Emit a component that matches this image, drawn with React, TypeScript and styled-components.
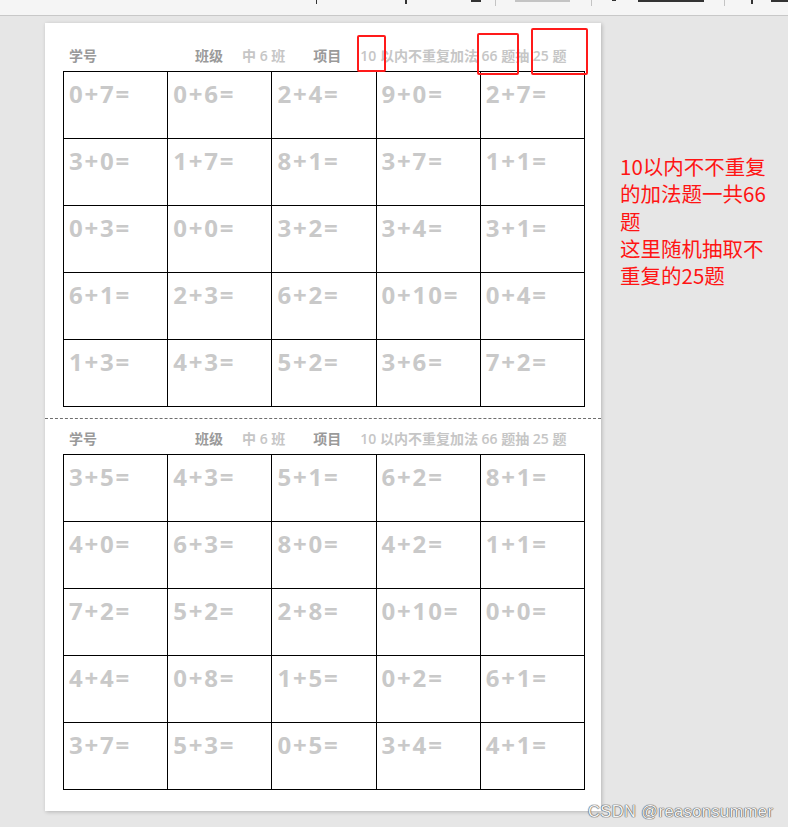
import React from "react";
import styled, { createGlobalStyle } from "styled-components";

const Global = createGlobalStyle`
  html, body { margin: 0; padding: 0; }
  body {
    background: #e6e6e6;
    font-family: "Open Sans", "Noto Sans CJK SC", sans-serif;
    width: 788px;
    height: 827px;
    overflow: hidden;
  }
`;

const Screen = styled.div`
  position: relative;
  width: 788px;
  height: 827px;
  display: flex;
  flex-direction: column;
`;

const Toolbar = styled.div`
  height: 15px;
  background: #f5f5f5;
  border-bottom: 1px solid #c8c8c8;
  display: flex;
  align-items: flex-start;
  padding-left: 316px;
  overflow: hidden;
`;

const ToolMark = styled.span<{ $w: number; $h: number; $ml: number; $dark?: boolean }>`
  display: block;
  width: ${(p) => p.$w}px;
  height: ${(p) => p.$h}px;
  margin-left: ${(p) => p.$ml}px;
  background: ${(p) => (p.$dark ? "#333" : "#c4c4c4")};
`;

const ToolSep = styled.span<{ $ml: number }>`
  display: block;
  width: 1px;
  height: 6px;
  margin-left: ${(p) => p.$ml}px;
  background: #c4c4c4;
`;

const Workspace = styled.div`
  flex: 1;
  display: flex;
  align-items: flex-start;
`;

const Page = styled.div`
  position: relative;
  margin: 7px 0 0 45px;
  width: 556px;
  height: 788px;
  background: #fff;
  box-shadow: 1px 1px 4px rgba(0, 0, 0, 0.22);
  box-sizing: border-box;
  padding-top: 22px;
  display: flex;
  flex-direction: column;
`;

const Sheet = styled.div`
  padding: 0 16px 0 18px;
`;

const Header = styled.div`
  display: flex;
  align-items: center;
  height: 20px;
  margin-bottom: 6px;
  padding-left: 6px;
  font-size: 14px;
  font-weight: 700;
  white-space: nowrap;
`;

const Label = styled.span<{ $w?: number }>`
  color: #9a9a9a;
  font-family: "Noto Sans CJK SC", sans-serif;
  font-weight: 700;
  ${(p) => (p.$w ? `width: ${p.$w}px;` : "")}
  margin-right: 19px;
`;

const Value = styled.span<{ $mr?: number }>`
  color: #c6c6c6;
  font-family: "Open Sans", "Noto Sans CJK SC", sans-serif;
  font-weight: 600;
  margin-right: ${(p) => p.$mr ?? 0}px;
`;

const Grid = styled.table`
  border-collapse: collapse;
  width: 522px;
  table-layout: fixed;
`;

const Cell = styled.td`
  border: 1px solid #000;
  height: 67px;
  box-sizing: border-box;
  vertical-align: top;
  padding: 7px 0 0 5px;
  font-family: "Open Sans", sans-serif;
  font-weight: 700;
  font-size: 24px;
  line-height: 30px;
  letter-spacing: 1.8px;
  color: #c9c9c9;
`;

const Cut = styled.div`
  border-top: 1px dashed #6e6e6e;
  margin: 11px 0 9px;
`;

const Mark = styled.div`
  position: absolute;
  border: 2px solid #ff1a1a;
  border-radius: 2px;
  box-sizing: border-box;
`;

const Note = styled.div`
  margin: 137px 0 0 19px;
  width: 154px;
  color: #ff1414;
  font-family: "Noto Sans CJK SC", sans-serif;
  font-size: 20.5px;
  line-height: 27.3px;
  letter-spacing: 0;
  word-break: break-all;
`;

const Watermark = styled.div`
  position: absolute;
  left: 588px;
  bottom: 6px;
  font-family: "Liberation Sans", Arial, sans-serif;
  font-size: 16.5px;
  color: #f2f2f2;
  text-shadow: 0 0 1px #555, 0 0 1px #555, 0 0 1px #555;
  letter-spacing: 0.4px;
  white-space: nowrap;
`;

const table1 = [
  ["0+7=", "0+6=", "2+4=", "9+0=", "2+7="],
  ["3+0=", "1+7=", "8+1=", "3+7=", "1+1="],
  ["0+3=", "0+0=", "3+2=", "3+4=", "3+1="],
  ["6+1=", "2+3=", "6+2=", "0+10=", "0+4="],
  ["1+3=", "4+3=", "5+2=", "3+6=", "7+2="],
];

const table2 = [
  ["3+5=", "4+3=", "5+1=", "6+2=", "8+1="],
  ["4+0=", "6+3=", "8+0=", "4+2=", "1+1="],
  ["7+2=", "5+2=", "2+8=", "0+10=", "0+0="],
  ["4+4=", "0+8=", "1+5=", "0+2=", "6+1="],
  ["3+7=", "5+3=", "0+5=", "3+4=", "4+1="],
];

const Worksheet: React.FC<{ rows: string[][] }> = ({ rows }) => (
  <Sheet>
    <Header>
      <Label $w={107}>学号</Label>
      <Label>班级</Label>
      <Value $mr={28}>中 6 班</Value>
      <Label>项目</Label>
      <Value>10 以内不重复加法 66 题抽 25 题</Value>
    </Header>
    <Grid>
      <tbody>
        {rows.map((r, i) => (
          <tr key={i}>
            {r.map((c, j) => (
              <Cell key={j}>{c}</Cell>
            ))}
          </tr>
        ))}
      </tbody>
    </Grid>
  </Sheet>
);

export default function App() {
  return (
    <>
      <Global />
      <Screen>
        <Toolbar>
          <ToolMark $w={1} $h={4} $ml={0} $dark />
          <ToolMark $w={3} $h={4} $ml={88} $dark />
          <ToolMark $w={12} $h={2} $ml={64} $dark />
          <ToolSep $ml={14} />
          <ToolMark $w={70} $h={2} $ml={20} />
          <ToolSep $ml={21} />
          <ToolMark $w={5} $h={1} $ml={20} $dark />
          <ToolMark $w={84} $h={2} $ml={22} $dark />
          <ToolSep $ml={20} />
          <ToolMark $w={2} $h={4} $ml={26} $dark />
          <ToolMark $w={22} $h={2} $ml={18} $dark />
        </Toolbar>
        <Workspace>
          <Page>
            <Worksheet rows={table1} />
            <Cut />
            <Worksheet rows={table2} />
            <Mark style={{ left: 312, top: 12, width: 29, height: 37 }} />
            <Mark style={{ left: 432, top: 10, width: 42, height: 42 }} />
            <Mark style={{ left: 486, top: 5, width: 57, height: 47 }} />
          </Page>
          <Note>
            10以内不不重复的加法题一共66题
            <br />
            这里随机抽取不重复的25题
          </Note>
        </Workspace>
        <Watermark>CSDN @reasonsummer</Watermark>
      </Screen>
    </>
  );
}
